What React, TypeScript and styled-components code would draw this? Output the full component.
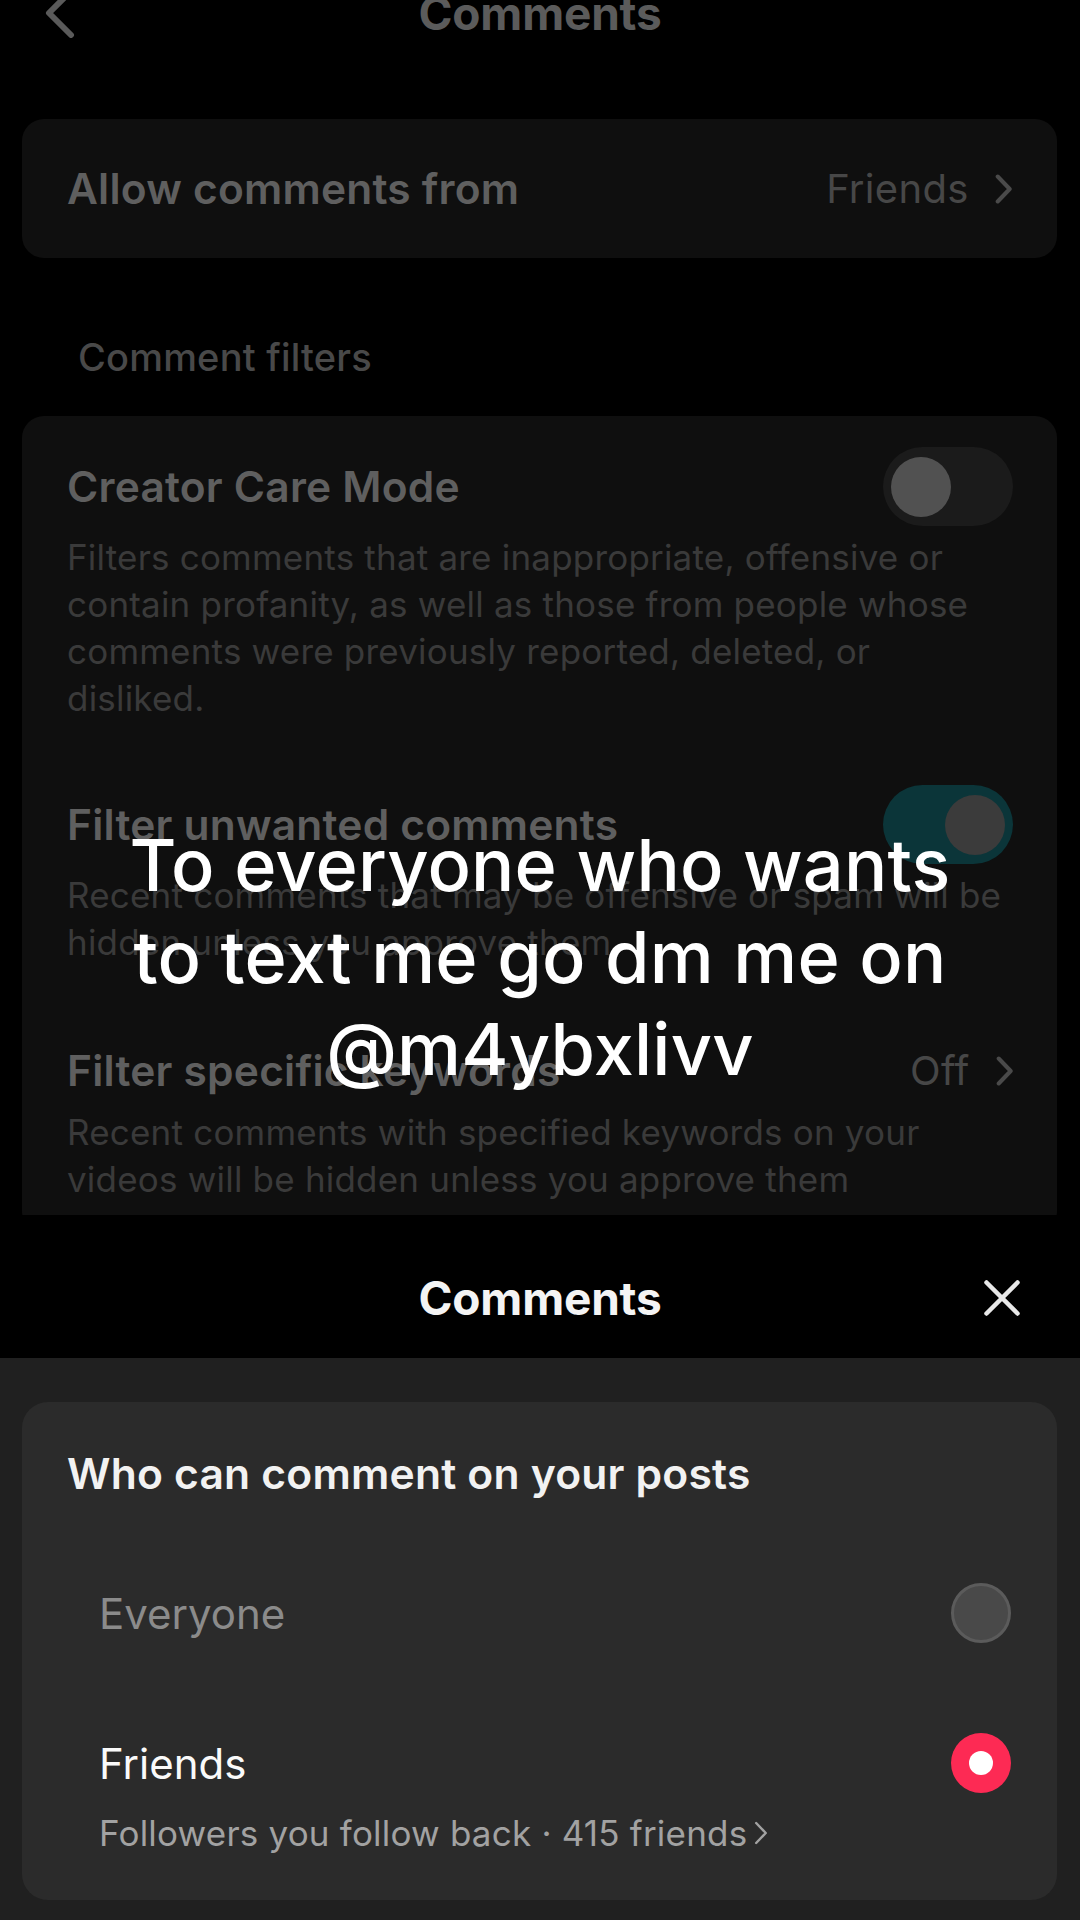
import React from "react";
import styled, { createGlobalStyle } from "styled-components";

const GlobalStyle = createGlobalStyle`
  html, body {
    margin: 0;
    padding: 0;
    background: #000;
  }
  body {
    font-family: Inter, "Noto Sans", "Liberation Sans", sans-serif;
    -webkit-font-smoothing: antialiased;
  }
  #root {
    width: 1080px;
    height: 1920px;
    overflow: hidden;
  }
`;

const Screen = styled.div`
  position: relative;
  width: 1080px;
  height: 1920px;
  background: #000;
  display: flex;
  flex-direction: column;
  overflow: hidden;
`;

/* ---------- Settings page (dimmed) ---------- */

const Settings = styled.div`
  height: 1215px;
  flex-shrink: 0;
  display: flex;
  flex-direction: column;
  overflow: hidden;

  & > * {
    flex-shrink: 0;
  }
`;

const NavBar = styled.div`
  height: 88px;
  margin-top: -31px;
  display: grid;
  grid-template-columns: 1fr auto 1fr;
  align-items: center;
  padding: 0 44px;
`;

const BackButton = styled.div`
  display: flex;
  align-items: center;
  color: #5a5a5a;
`;

const NavTitle = styled.div<{ $light?: boolean }>`
  font-size: 46px;
  font-weight: 700;
  line-height: 1;
  color: ${(p) => (p.$light ? "#f4f4f4" : "#5b5b5b")};
  letter-spacing: -0.2px;
`;

const Card = styled.div<{ $top: number }>`
  margin: ${(p) => p.$top}px 23px 0 22px;
  background: #0f0f0f;
  border-radius: 22px;
`;

const LinkRow = styled.div`
  height: 139px;
  display: flex;
  align-items: center;
  justify-content: space-between;
  padding: 0 45px;
`;

const RowTitle = styled.div`
  font-size: 42.5px;
  font-weight: 600;
  color: #5f5f5f;
  line-height: 50px;
  letter-spacing: 0.2px;
`;

const RowValue = styled.div`
  display: flex;
  align-items: center;
  gap: 26px;
  font-size: 40px;
  font-weight: 400;
  color: #474747;
  letter-spacing: 0.3px;
`;

const SectionLabel = styled.div`
  margin: 74px 0 0 78px;
  font-size: 38px;
  line-height: 50px;
  font-weight: 500;
  color: #494949;
  letter-spacing: 0.2px;
`;

const FilterCard = styled(Card)`
  padding: 31px 44px 30px 45px;
`;

const FilterItem = styled.div<{ $gap: number }>`
  margin-top: ${(p) => p.$gap}px;
`;

const ItemRow = styled.div`
  min-height: 79px;
  display: flex;
  align-items: center;
  justify-content: space-between;
`;

const Desc = styled.div<{ $gap: number }>`
  margin-top: ${(p) => p.$gap}px;
  font-size: 35px;
  line-height: 47px;
  color: #3a3a3a;
  white-space: pre-line;
  letter-spacing: 0.2px;
`;

const Toggle = styled.div<{ $on?: boolean }>`
  width: 130px;
  height: 79px;
  border-radius: 40px;
  background: ${(p) => (p.$on ? "#0b3539" : "#1b1b1b")};
  display: flex;
  align-items: center;
  justify-content: ${(p) => (p.$on ? "flex-end" : "flex-start")};
  padding: 0 8px;
  box-sizing: border-box;
  flex-shrink: 0;
`;

const Knob = styled.div<{ $on?: boolean }>`
  width: 60px;
  height: 60px;
  border-radius: 50%;
  background: ${(p) => (p.$on ? "#3b3b3b" : "#515151")};
`;

/* ---------- Caption overlay ---------- */

const Caption = styled.div`
  position: absolute;
  top: 819px;
  left: 0;
  right: 0;
  text-align: center;
  font-family: Inter, "Noto Sans", sans-serif;
  font-size: 72px;
  font-weight: 500;
  line-height: 92px;
  color: #fff;
  letter-spacing: 0.2px;
  white-space: pre-line;
`;

/* ---------- Bottom sheet ---------- */

const Sheet = styled.div`
  flex: 1;
  display: flex;
  flex-direction: column;
`;

const SheetHeader = styled.div`
  height: 143px;
  box-sizing: border-box;
  flex-shrink: 0;
  background: #000;
  display: grid;
  grid-template-columns: 1fr auto 1fr;
  align-items: center;
  padding: 22px 60px 0;
`;

const CloseButton = styled.div`
  justify-self: end;
  display: flex;
  color: #e8e8e8;
`;

const SheetBody = styled.div`
  flex: 1;
  background: #202020;
  padding: 44px 23px 0 22px;
`;

const OptionsCard = styled.div`
  height: 498px;
  box-sizing: border-box;
  background: #2b2b2b;
  border-radius: 26px;
  padding: 47px 46px 0 45px;
`;

const OptionsHeading = styled.div`
  font-size: 42.6px;
  font-weight: 600;
  line-height: 50px;
  color: #f2f2f2;
  letter-spacing: 0.2px;
`;

const Option = styled.div<{ $gap: number }>`
  margin-top: ${(p) => p.$gap}px;
  padding-left: 32px;
`;

const OptionRow = styled.div`
  height: 60px;
  display: flex;
  align-items: center;
  justify-content: space-between;
`;

const OptionLabel = styled.div<{ $active?: boolean }>`
  font-size: 42px;
  font-weight: 400;
  color: ${(p) => (p.$active ? "#fafafa" : "#8b8b8b")};
  letter-spacing: 0px;
`;

const OptionSub = styled.div`
  margin-top: 18px;
  font-size: 35px;
  line-height: 44px;
  color: #a2a2a2;
  display: flex;
  align-items: center;
  gap: 7px;
  letter-spacing: 0.2px;
`;

const Radio = styled.div<{ $checked?: boolean }>`
  width: 60px;
  height: 60px;
  border-radius: 50%;
  box-sizing: border-box;
  background: ${(p) => (p.$checked ? "#fd2a54" : "#494949")};
  border: ${(p) => (p.$checked ? "none" : "3px solid #5b5b5b")};
  display: flex;
  align-items: center;
  justify-content: center;
  flex-shrink: 0;
`;

const RadioDot = styled.div`
  width: 24px;
  height: 24px;
  border-radius: 50%;
  background: #fff;
`;

const Chevron = ({ size = 30, stroke = 4, color = "currentColor" }: { size?: number; stroke?: number; color?: string }) => (
  <svg width={size * 0.58} height={size} viewBox="0 0 17 30" fill="none">
    <path d="M2.5 2.5 L14.5 15 L2.5 27.5" stroke={color} strokeWidth={stroke} strokeLinecap="round" strokeLinejoin="round" />
  </svg>
);

export default function App() {
  return (
    <>
      <GlobalStyle />
      <Screen>
        <Settings>
          <NavBar>
            <BackButton>
              <svg width="32" height="50" viewBox="0 0 32 50" fill="none">
                <path d="M27 3 L5 25 L27 47" stroke="#5a5a5a" strokeWidth="6" strokeLinecap="round" strokeLinejoin="round" />
              </svg>
            </BackButton>
            <NavTitle>Comments</NavTitle>
            <div />
          </NavBar>

          <Card $top={62}>
            <LinkRow>
              <RowTitle>Allow comments from</RowTitle>
              <RowValue>
                Friends
                <Chevron size={30} stroke={4} color="#4a4a4a" />
              </RowValue>
            </LinkRow>
          </Card>

          <SectionLabel>Comment filters</SectionLabel>

          <FilterCard $top={34}>
            <FilterItem $gap={0}>
              <ItemRow>
                <RowTitle>Creator Care Mode</RowTitle>
                <Toggle>
                  <Knob />
                </Toggle>
              </ItemRow>
              <Desc $gap={8}>
                {"Filters comments that are inappropriate, offensive or\ncontain profanity, as well as those from people whose\ncomments were previously reported, deleted, or\ndisliked."}
              </Desc>
            </FilterItem>

            <FilterItem $gap={63}>
              <ItemRow>
                <RowTitle>Filter unwanted comments</RowTitle>
                <Toggle $on>
                  <Knob $on />
                </Toggle>
              </ItemRow>
              <Desc $gap={8}>
                {"Recent comments that may be offensive or spam will be\nhidden unless you approve them"}
              </Desc>
            </FilterItem>

            <FilterItem $gap={65}>
              <ItemRow>
                <RowTitle>Filter specific keywords</RowTitle>
                <RowValue>
                  Off
                  <Chevron size={30} stroke={4} color="#4a4a4a" />
                </RowValue>
              </ItemRow>
              <Desc $gap={-1}>
                {"Recent comments with specified keywords on your\nvideos will be hidden unless you approve them"}
              </Desc>
            </FilterItem>
          </FilterCard>
        </Settings>

        <Sheet>
          <SheetHeader>
            <div />
            <NavTitle $light>Comments</NavTitle>
            <CloseButton>
              <svg width="36" height="36" viewBox="0 0 36 36" fill="none">
                <path d="M2.5 2.5 L33.5 33.5 M33.5 2.5 L2.5 33.5" stroke="#e8e8e8" strokeWidth="4.5" strokeLinecap="round" />
              </svg>
            </CloseButton>
          </SheetHeader>
          <SheetBody>
            <OptionsCard>
              <OptionsHeading>Who can comment on your posts</OptionsHeading>
              <Option $gap={84}>
                <OptionRow>
                  <OptionLabel>Everyone</OptionLabel>
                  <Radio />
                </OptionRow>
              </Option>
              <Option $gap={90}>
                <OptionRow>
                  <OptionLabel $active>Friends</OptionLabel>
                  <Radio $checked>
                    <RadioDot />
                  </Radio>
                </OptionRow>
                <OptionSub>
                  Followers you follow back · 415 friends
                  <Chevron size={24} stroke={3} color="#a2a2a2" />
                </OptionSub>
              </Option>
            </OptionsCard>
          </SheetBody>
        </Sheet>

        <Caption>{"To everyone who wants\nto text me go dm me on\n@m4ybxlivv"}</Caption>
      </Screen>
    </>
  );
}
